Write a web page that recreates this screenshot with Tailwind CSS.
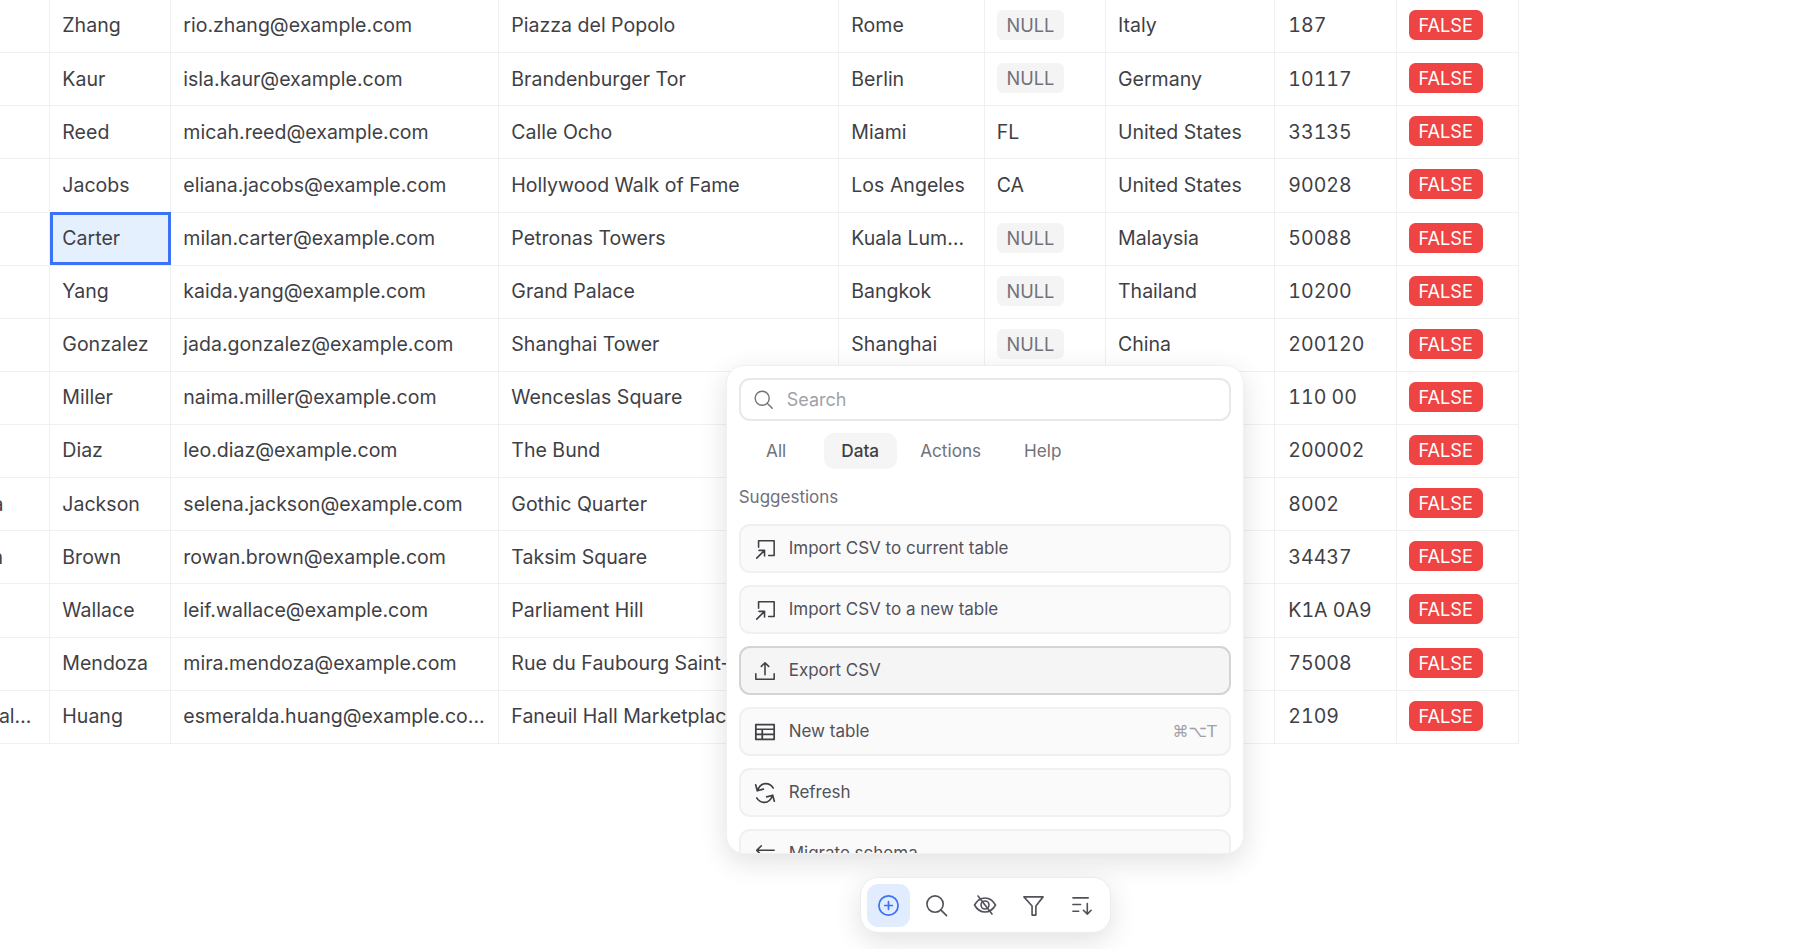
<!DOCTYPE html>
<html><head><meta charset="utf-8">
<script src="https://cdn.jsdelivr.net/npm/@tailwindcss/browser@4"></script>
<title>Table</title></head>
<body class="bg-white overflow-hidden">
<div class="relative w-[1800px] h-[949px] overflow-hidden bg-white font-['Inter',sans-serif] text-[19.55px] text-[#3f3f46]">
  <table class="table-fixed border-collapse w-[1590.67px] ml-[-72px] mt-[-1px]">
    <colgroup><col class="w-[121.33px]"><col class="w-[121px]"><col class="w-[328px]"><col class="w-[340px]"><col class="w-[145.33px]"><col class="w-[121.33px]"><col class="w-[169.33px]"><col class="w-[121.33px]"><col class="w-[122.67px]"></colgroup>
    <tbody class="[&_span]:mb-[2px]">
      <tr class="h-[53.13px]"><td class="border border-[#f0f0f0] px-3 truncate">Rio</td><td class="border border-[#f0f0f0] px-3 truncate">Zhang</td><td class="border border-[#f0f0f0] px-3 truncate">rio.zhang@example.com</td><td class="border border-[#f0f0f0] px-3 truncate">Piazza del Popolo</td><td class="border border-[#f0f0f0] px-3 truncate">Rome</td><td class="border border-[#f0f0f0] px-3"><span class="inline-block px-[9.8px] leading-[30px] rounded-[6px] bg-[#f4f4f5] text-[#71717a] text-[18.2px] align-middle">NULL</span></td><td class="border border-[#f0f0f0] px-3 truncate">Italy</td><td class="border border-[#f0f0f0] px-3 pl-[13px] tabular-nums truncate">187</td><td class="border border-[#f0f0f0] px-3"><span class="inline-block px-[9.8px] leading-[30px] rounded-[6.500px] bg-[#ef4444] text-white text-[18.2px] align-middle">FALSE</span></td></tr>
      <tr class="h-[53.13px]"><td class="border border-[#f0f0f0] px-3 truncate">Isla</td><td class="border border-[#f0f0f0] px-3 truncate">Kaur</td><td class="border border-[#f0f0f0] px-3 truncate">isla.kaur@example.com</td><td class="border border-[#f0f0f0] px-3 truncate">Brandenburger Tor</td><td class="border border-[#f0f0f0] px-3 truncate">Berlin</td><td class="border border-[#f0f0f0] px-3"><span class="inline-block px-[9.8px] leading-[30px] rounded-[6px] bg-[#f4f4f5] text-[#71717a] text-[18.2px] align-middle">NULL</span></td><td class="border border-[#f0f0f0] px-3 truncate">Germany</td><td class="border border-[#f0f0f0] px-3 pl-[13px] tabular-nums truncate">10117</td><td class="border border-[#f0f0f0] px-3"><span class="inline-block px-[9.8px] leading-[30px] rounded-[6.500px] bg-[#ef4444] text-white text-[18.2px] align-middle">FALSE</span></td></tr>
      <tr class="h-[53.13px]"><td class="border border-[#f0f0f0] px-3 truncate">Micah</td><td class="border border-[#f0f0f0] px-3 truncate">Reed</td><td class="border border-[#f0f0f0] px-3 truncate">micah.reed@example.com</td><td class="border border-[#f0f0f0] px-3 truncate">Calle Ocho</td><td class="border border-[#f0f0f0] px-3 truncate">Miami</td><td class="border border-[#f0f0f0] px-3 truncate">FL</td><td class="border border-[#f0f0f0] px-3 truncate">United States</td><td class="border border-[#f0f0f0] px-3 pl-[13px] tabular-nums truncate">33135</td><td class="border border-[#f0f0f0] px-3"><span class="inline-block px-[9.8px] leading-[30px] rounded-[6.500px] bg-[#ef4444] text-white text-[18.2px] align-middle">FALSE</span></td></tr>
      <tr class="h-[53.13px]"><td class="border border-[#f0f0f0] px-3 truncate">Eliana</td><td class="border border-[#f0f0f0] px-3 truncate">Jacobs</td><td class="border border-[#f0f0f0] px-3 truncate">eliana.jacobs@example.com</td><td class="border border-[#f0f0f0] px-3 truncate">Hollywood Walk of Fame</td><td class="border border-[#f0f0f0] px-3 truncate">Los Angeles</td><td class="border border-[#f0f0f0] px-3 truncate">CA</td><td class="border border-[#f0f0f0] px-3 truncate">United States</td><td class="border border-[#f0f0f0] px-3 pl-[13px] tabular-nums truncate">90028</td><td class="border border-[#f0f0f0] px-3"><span class="inline-block px-[9.8px] leading-[30px] rounded-[6.500px] bg-[#ef4444] text-white text-[18.2px] align-middle">FALSE</span></td></tr>
      <tr class="h-[53.13px]"><td class="border border-[#f0f0f0] px-3 truncate">Milan</td><td class="outline-[3px] -outline-offset-[3px] outline-[#3b72f6] bg-[#e5f0ff] border border-[#f0f0f0] px-3 truncate">Carter</td><td class="border border-[#f0f0f0] px-3 truncate">milan.carter@example.com</td><td class="border border-[#f0f0f0] px-3 truncate">Petronas Towers</td><td class="border border-[#f0f0f0] px-3 truncate">Kuala Lumpur</td><td class="border border-[#f0f0f0] px-3"><span class="inline-block px-[9.8px] leading-[30px] rounded-[6px] bg-[#f4f4f5] text-[#71717a] text-[18.2px] align-middle">NULL</span></td><td class="border border-[#f0f0f0] px-3 truncate">Malaysia</td><td class="border border-[#f0f0f0] px-3 pl-[13px] tabular-nums truncate">50088</td><td class="border border-[#f0f0f0] px-3"><span class="inline-block px-[9.8px] leading-[30px] rounded-[6.500px] bg-[#ef4444] text-white text-[18.2px] align-middle">FALSE</span></td></tr>
      <tr class="h-[53.13px]"><td class="border border-[#f0f0f0] px-3 truncate">Kaida</td><td class="border border-[#f0f0f0] px-3 truncate">Yang</td><td class="border border-[#f0f0f0] px-3 truncate">kaida.yang@example.com</td><td class="border border-[#f0f0f0] px-3 truncate">Grand Palace</td><td class="border border-[#f0f0f0] px-3 truncate">Bangkok</td><td class="border border-[#f0f0f0] px-3"><span class="inline-block px-[9.8px] leading-[30px] rounded-[6px] bg-[#f4f4f5] text-[#71717a] text-[18.2px] align-middle">NULL</span></td><td class="border border-[#f0f0f0] px-3 truncate">Thailand</td><td class="border border-[#f0f0f0] px-3 pl-[13px] tabular-nums truncate">10200</td><td class="border border-[#f0f0f0] px-3"><span class="inline-block px-[9.8px] leading-[30px] rounded-[6.500px] bg-[#ef4444] text-white text-[18.2px] align-middle">FALSE</span></td></tr>
      <tr class="h-[53.13px]"><td class="border border-[#f0f0f0] px-3 truncate">Jada</td><td class="border border-[#f0f0f0] px-3 truncate">Gonzalez</td><td class="border border-[#f0f0f0] px-3 truncate">jada.gonzalez@example.com</td><td class="border border-[#f0f0f0] px-3 truncate">Shanghai Tower</td><td class="border border-[#f0f0f0] px-3 truncate">Shanghai</td><td class="border border-[#f0f0f0] px-3"><span class="inline-block px-[9.8px] leading-[30px] rounded-[6px] bg-[#f4f4f5] text-[#71717a] text-[18.2px] align-middle">NULL</span></td><td class="border border-[#f0f0f0] px-3 truncate">China</td><td class="border border-[#f0f0f0] px-3 pl-[13px] tabular-nums truncate">200120</td><td class="border border-[#f0f0f0] px-3"><span class="inline-block px-[9.8px] leading-[30px] rounded-[6.500px] bg-[#ef4444] text-white text-[18.2px] align-middle">FALSE</span></td></tr>
      <tr class="h-[53.13px]"><td class="border border-[#f0f0f0] px-3 truncate"></td><td class="border border-[#f0f0f0] px-3 truncate">Miller</td><td class="border border-[#f0f0f0] px-3 truncate">naima.miller@example.com</td><td class="border border-[#f0f0f0] px-3 truncate">Wenceslas Square</td><td class="border border-[#f0f0f0] px-3"></td><td class="border border-[#f0f0f0] px-3"></td><td class="border border-[#f0f0f0] px-3"></td><td class="border border-[#f0f0f0] px-3 pl-[13px] tabular-nums truncate">110 00</td><td class="border border-[#f0f0f0] px-3"><span class="inline-block px-[9.8px] leading-[30px] rounded-[6.500px] bg-[#ef4444] text-white text-[18.2px] align-middle">FALSE</span></td></tr>
      <tr class="h-[53.13px]"><td class="border border-[#f0f0f0] px-3 truncate"></td><td class="border border-[#f0f0f0] px-3 truncate">Diaz</td><td class="border border-[#f0f0f0] px-3 truncate">leo.diaz@example.com</td><td class="border border-[#f0f0f0] px-3 truncate">The Bund</td><td class="border border-[#f0f0f0] px-3"></td><td class="border border-[#f0f0f0] px-3"></td><td class="border border-[#f0f0f0] px-3"></td><td class="border border-[#f0f0f0] px-3 pl-[13px] tabular-nums truncate">200002</td><td class="border border-[#f0f0f0] px-3"><span class="inline-block px-[9.8px] leading-[30px] rounded-[6.500px] bg-[#ef4444] text-white text-[18.2px] align-middle">FALSE</span></td></tr>
      <tr class="h-[53.13px]"><td class="border border-[#f0f0f0] px-3 truncate">Selena</td><td class="border border-[#f0f0f0] px-3 truncate">Jackson</td><td class="border border-[#f0f0f0] px-3 truncate">selena.jackson@example.com</td><td class="border border-[#f0f0f0] px-3 truncate">Gothic Quarter</td><td class="border border-[#f0f0f0] px-3"></td><td class="border border-[#f0f0f0] px-3"></td><td class="border border-[#f0f0f0] px-3"></td><td class="border border-[#f0f0f0] px-3 pl-[13px] tabular-nums truncate">8002</td><td class="border border-[#f0f0f0] px-3"><span class="inline-block px-[9.8px] leading-[30px] rounded-[6.500px] bg-[#ef4444] text-white text-[18.2px] align-middle">FALSE</span></td></tr>
      <tr class="h-[53.13px]"><td class="border border-[#f0f0f0] px-3 truncate">Rowan</td><td class="border border-[#f0f0f0] px-3 truncate">Brown</td><td class="border border-[#f0f0f0] px-3 truncate">rowan.brown@example.com</td><td class="border border-[#f0f0f0] px-3 truncate">Taksim Square</td><td class="border border-[#f0f0f0] px-3"></td><td class="border border-[#f0f0f0] px-3"></td><td class="border border-[#f0f0f0] px-3"></td><td class="border border-[#f0f0f0] px-3 pl-[13px] tabular-nums truncate">34437</td><td class="border border-[#f0f0f0] px-3"><span class="inline-block px-[9.8px] leading-[30px] rounded-[6.500px] bg-[#ef4444] text-white text-[18.2px] align-middle">FALSE</span></td></tr>
      <tr class="h-[53.13px]"><td class="border border-[#f0f0f0] px-3 truncate"></td><td class="border border-[#f0f0f0] px-3 truncate">Wallace</td><td class="border border-[#f0f0f0] px-3 truncate">leif.wallace@example.com</td><td class="border border-[#f0f0f0] px-3 truncate">Parliament Hill</td><td class="border border-[#f0f0f0] px-3"></td><td class="border border-[#f0f0f0] px-3"></td><td class="border border-[#f0f0f0] px-3"></td><td class="border border-[#f0f0f0] px-3 pl-[13px] tabular-nums truncate">K1A 0A9</td><td class="border border-[#f0f0f0] px-3"><span class="inline-block px-[9.8px] leading-[30px] rounded-[6.500px] bg-[#ef4444] text-white text-[18.2px] align-middle">FALSE</span></td></tr>
      <tr class="h-[53.13px]"><td class="border border-[#f0f0f0] px-3 truncate"></td><td class="border border-[#f0f0f0] px-3 truncate">Mendoza</td><td class="border border-[#f0f0f0] px-3 truncate">mira.mendoza@example.com</td><td class="border border-[#f0f0f0] px-3 truncate">Rue du Faubourg Saint-Honoré</td><td class="border border-[#f0f0f0] px-3"></td><td class="border border-[#f0f0f0] px-3"></td><td class="border border-[#f0f0f0] px-3"></td><td class="border border-[#f0f0f0] px-3 pl-[13px] tabular-nums truncate">75008</td><td class="border border-[#f0f0f0] px-3"><span class="inline-block px-[9.8px] leading-[30px] rounded-[6.500px] bg-[#ef4444] text-white text-[18.2px] align-middle">FALSE</span></td></tr>
      <tr class="h-[53.13px]"><td class="border border-[#f0f0f0] px-3 truncate">Esmeralda</td><td class="border border-[#f0f0f0] px-3 truncate">Huang</td><td class="border border-[#f0f0f0] pl-3 whitespace-nowrap overflow-hidden">esmeralda.huang@example.co...</td><td class="border border-[#f0f0f0] px-3 truncate">Faneuil Hall Marketplace</td><td class="border border-[#f0f0f0] px-3"></td><td class="border border-[#f0f0f0] px-3"></td><td class="border border-[#f0f0f0] px-3"></td><td class="border border-[#f0f0f0] px-3 pl-[13px] tabular-nums truncate">2109</td><td class="border border-[#f0f0f0] px-3"><span class="inline-block px-[9.8px] leading-[30px] rounded-[6.500px] bg-[#ef4444] text-white text-[18.2px] align-middle">FALSE</span></td></tr>
    </tbody>
  </table>

  <!-- command popup -->
  <div class="absolute left-[725.7px] top-[365px] w-[518px] h-[489px] overflow-hidden bg-white rounded-[18px] border border-[#f0f0f0] shadow-[0_8px_28px_rgba(0,0,0,0.12)] px-[12px] pt-[12px]">
    <div class="flex items-center h-[43px] rounded-[11px] border-2 border-[#e8e8e8] pl-[12px] gap-[13px] text-[#a1a1aa] text-[18px]">
      <svg class="w-[21px] h-[21px]" viewBox="0 0 24 24" fill="none" stroke="#71717a" stroke-width="1.6" stroke-linecap="round"><circle cx="10.500" cy="10.500" r="8"/><path d="M16.500 16.500 22 22"/></svg>
      <span>Search</span>
    </div>
    <div class="flex items-center mt-[12px] h-[36px] text-[17.2px] text-[#71717a]">
      <span class="w-[75px] h-full flex items-center justify-center">All</span>
      <span class="ml-[10px] w-[73px] h-full rounded-[10px] bg-[#f5f5f5] text-[#3f3f46] font-medium flex items-center justify-center">Data</span>
      <span class="ml-[8px] w-[92px] h-full flex items-center justify-center">Actions</span>
      <span class="ml-[4px] w-[84px] h-full flex items-center justify-center">Help</span>
    </div>
    <div class="mt-[17px] text-[17px] leading-[22px] text-[#71717a]">Suggestions</div>
    <div class="mt-[16px] flex flex-col gap-[12px] text-[17px] text-[#52525b]">
      <div class="h-[49px] flex items-center rounded-[11px] border-2 border-[#f0f0f0] bg-[#fafafa] pl-[13px] pr-[12px] gap-[13px]">
        <svg class="w-[22px] h-[22px] shrink-0" viewBox="0 0 24 24" fill="none" stroke="#3f3f46" stroke-width="1.7" stroke-linecap="round" stroke-linejoin="round"><path d="M5 10V3h17v16h-6M3 22l8.500-8.500M5.500 13.500h6v6"/></svg>
        <span>Import CSV to current table</span>
      </div>
      <div class="h-[49px] flex items-center rounded-[11px] border-2 border-[#f0f0f0] bg-[#fafafa] pl-[13px] pr-[12px] gap-[13px]">
        <svg class="w-[22px] h-[22px] shrink-0" viewBox="0 0 24 24" fill="none" stroke="#3f3f46" stroke-width="1.7" stroke-linecap="round" stroke-linejoin="round"><path d="M5 10V3h17v16h-6M3 22l8.500-8.500M5.500 13.500h6v6"/></svg>
        <span>Import CSV to a new table</span>
      </div>
      <div class="h-[49px] flex items-center rounded-[11px] border-2 border-[#d4d4d4] bg-[#f5f5f5] pl-[13px] pr-[12px] gap-[13px]">
        <svg class="w-[22px] h-[22px] shrink-0" viewBox="0 0 24 24" fill="none" stroke="#3f3f46" stroke-width="1.7" stroke-linecap="round" stroke-linejoin="round"><path d="M2 15v6h20v-6M12 16V3M8 7l4-4 4 4"/></svg>
        <span>Export CSV</span>
      </div>
      <div class="h-[49px] flex items-center rounded-[11px] border-2 border-[#f0f0f0] bg-[#fafafa] pl-[13px] pr-[12px] gap-[13px]">
        <svg class="w-[22px] h-[22px] shrink-0" viewBox="0 0 24 24" fill="none" stroke="#3f3f46" stroke-width="1.9" stroke-linejoin="round"><path d="M2 4h20v16H2zM2 9h20M2 14.500h20M9 9v11"/></svg>
        <span>New table</span>
        <span class="ml-auto text-[#a1a1aa] font-['DejaVu_Sans',sans-serif] text-[16px]">⌘⌥T</span>
      </div>
      <div class="h-[49px] flex items-center rounded-[11px] border-2 border-[#f0f0f0] bg-[#fafafa] pl-[13px] pr-[12px] gap-[13px]">
        <svg class="w-[22px] h-[22px] shrink-0" viewBox="2 2 20 20" fill="none" stroke="#3f3f46" stroke-width="1.500" stroke-linecap="round" stroke-linejoin="round"><path d="M5 10c1.500-4 4-6.500 7.500-6.500 3 0 5.500 1.500 7 4M3.500 4.500 5 10l5.500-1.500M19 14c-1.500 4-4 6.500-7.500 6.500-3 0-5.500-1.500-7-4M20.500 19.500 19 14l-5.500 1.500"/></svg>
        <span>Refresh</span>
      </div>
      <div class="h-[49px] flex items-center rounded-[11px] border-2 border-[#f0f0f0] bg-[#fafafa] pl-[13px] pr-[12px] gap-[13px]">
        <svg class="w-[22px] h-[22px] shrink-0" viewBox="0 0 24 24" fill="none" stroke="#3f3f46" stroke-width="1.7" stroke-linecap="round" stroke-linejoin="round"><path d="M22 8H3M8 3 3 8l5 5M2 16h19"/></svg>
        <span>Migrate schema</span>
      </div>
    </div>
  </div>

  <!-- toolbar -->
  <div class="absolute left-[859.5px] top-[877px] w-[251px] h-[56px] bg-white rounded-[18px] border border-[#ececec] shadow-[0_8px_28px_rgba(0,0,0,0.12)] flex items-center justify-between px-[6px]">
    <span class="w-[43px] h-[43px] rounded-[11px] bg-[#e1edff] flex items-center justify-center">
      <svg class="w-[23px] h-[23px]" viewBox="0 0 24 24" fill="none" stroke="#3b72f6" stroke-width="1.8" stroke-linecap="round"><circle cx="12" cy="12" r="10"/><path d="M12 8v8M8 12h8"/></svg>
    </span>
    <span class="w-[43px] h-[43px] flex items-center justify-center">
      <svg class="w-[23px] h-[23px]" viewBox="0 0 24 24" fill="none" stroke="#52525b" stroke-width="1.7" stroke-linecap="round"><circle cx="10.500" cy="10.500" r="8.500"/><path d="M16.500 16.500 22.500 22.500"/></svg>
    </span>
    <span class="w-[43px] h-[43px] flex items-center justify-center">
      <svg class="w-[24px] h-[24px]" viewBox="0 0 24 24" fill="none" stroke="#52525b" stroke-width="1.6" stroke-linecap="round" stroke-linejoin="round"><path d="M1.500 12C4 7.500 8 5 12 5s8 2.500 10.500 7C20 16.500 16 19 12 19S4 16.500 1.500 12Z"/><circle cx="12" cy="12" r="4"/><path d="M5 3l14 18"/></svg>
    </span>
    <span class="w-[43px] h-[43px] flex items-center justify-center">
      <svg class="w-[23px] h-[23px]" viewBox="0 0 24 24" fill="none" stroke="#52525b" stroke-width="1.7" stroke-linecap="round" stroke-linejoin="round"><path d="M2 3h20l-7.500 9.500V22h-4V12.500Z"/></svg>
    </span>
    <span class="w-[43px] h-[43px] flex items-center justify-center">
      <svg class="w-[23px] h-[23px]" viewBox="0 0 24 24" fill="none" stroke="#52525b" stroke-width="1.7" stroke-linecap="round" stroke-linejoin="round"><path d="M2 4h16M2 11h8M2 18h6M17 10v11M13 17l4 4 4-4"/></svg>
    </span>
  </div>
</div>
</body></html>
